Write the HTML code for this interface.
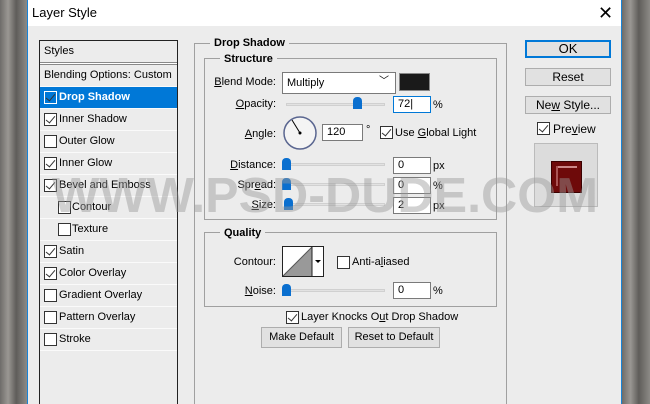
<!DOCTYPE html>
<html><head><style>
*{margin:0;padding:0;box-sizing:border-box}
html,body{width:650px;height:404px;overflow:hidden}
body{position:relative;background:#7a7875;font-family:"Liberation Sans",sans-serif;font-size:11px;color:#000}
.a{position:absolute}
.bg{background:linear-gradient(90deg,#6e6c69,#9a9793 30%,#5f5d5a 60%,#8c8a86)}
.cb{position:absolute;width:13px;height:13px;border:1px solid #333;background:#fff}
.cb.on::after{content:"";position:absolute;left:3px;top:0px;width:4px;height:8px;border:solid #333;border-width:0 1.5px 1.5px 0;transform:rotate(40deg)}
.row{position:absolute;left:40px;width:137px;height:22px;border-bottom:1px solid #fafafa;line-height:21px}
.inp{position:absolute;width:38px;height:17px;border:1px solid #7a7a7a;background:#fff;padding-left:4px;line-height:15px}
.u{position:absolute;line-height:17px}
.lbl{position:absolute;text-align:right;width:80px;line-height:14px}
.trk{position:absolute;height:3px;background:#e2e2e2;border:1px solid #d0d0d0}
.th{position:absolute;width:9px;height:12px;background:#0a6fcf;border-radius:4px 4px 0 0}
.btn{position:absolute;background:#e1e1e1;border:1px solid #adadad;text-align:center}
.fs{position:absolute;border:1px solid #a0a0a0}
.lg{position:absolute;background:#ececec;font-weight:bold;padding:0 4px;line-height:12px}
u{text-decoration:underline}
</style></head><body>
<div class="a bg" style="left:0;top:0;width:27px;height:404px"></div>
<div class="a bg" style="left:622px;top:0;width:28px;height:404px"></div>
<div class="a" style="left:27px;top:0;width:595px;height:404px;background:#ececec;border-left:1px solid #1883d7;border-right:1px solid #1883d7"></div>
<div class="a" style="left:28px;top:0;width:593px;height:26px;background:#fff;font-size:13px;line-height:26px;padding-left:4px">Layer Style</div>
<div class="a" style="left:598px;top:4px;font-size:18px;line-height:18px">✕</div>

<div class="a" style="left:39px;top:40px;width:139px;height:364px;border:1px solid #222;border-bottom:none;background:#ececec"></div>
<div class="a" style="left:44px;top:44px;line-height:14px">Styles</div>
<div class="a" style="left:40px;top:62px;width:137px;height:3px;border-top:1px solid #888;border-bottom:1px solid #888;background:#fff"></div>
<div class="row" style="top:65px;padding-left:4px">Blending Options: Custom</div>
<div class="row" style="top:87px;background:#0078d7;color:#fff;font-weight:bold;padding-left:19px">Drop Shadow</div>
<div class="cb on" style="left:44px;top:91px;border-color:#fff;background:#0078d7"></div>
<div class="row" style="top:109px;padding-left:19px">Inner Shadow</div><div class="cb on" style="left:44px;top:113px"></div>
<div class="row" style="top:131px;padding-left:19px">Outer Glow</div><div class="cb" style="left:44px;top:135px"></div>
<div class="row" style="top:153px;padding-left:19px">Inner Glow</div><div class="cb on" style="left:44px;top:157px"></div>
<div class="row" style="top:175px;padding-left:19px">Bevel and Emboss</div><div class="cb on" style="left:44px;top:179px"></div>
<div class="row" style="top:197px;padding-left:32px">Contour</div><div class="cb" style="left:58px;top:201px"></div>
<div class="row" style="top:219px;padding-left:32px">Texture</div><div class="cb" style="left:58px;top:223px"></div>
<div class="row" style="top:241px;padding-left:19px">Satin</div><div class="cb on" style="left:44px;top:245px"></div>
<div class="row" style="top:263px;padding-left:19px">Color Overlay</div><div class="cb on" style="left:44px;top:267px"></div>
<div class="row" style="top:285px;padding-left:19px">Gradient Overlay</div><div class="cb" style="left:44px;top:289px"></div>
<div class="row" style="top:307px;padding-left:19px">Pattern Overlay</div><div class="cb" style="left:44px;top:311px"></div>
<div class="row" style="top:329px;padding-left:19px">Stroke</div><div class="cb" style="left:44px;top:333px"></div>

<div class="fs" style="left:194px;top:43px;width:313px;height:361px;border-bottom:none"></div>
<div class="lg" style="left:210px;top:37px">Drop Shadow</div>
<div class="fs" style="left:204px;top:58px;width:293px;height:162px"></div>
<div class="lg" style="left:220px;top:53px">Structure</div>
<div class="lbl" style="left:196px;top:75px"><u>B</u>lend Mode:</div>
<div class="a" style="left:282px;top:72px;width:114px;height:22px;border:1px solid #7a7a7a;background:#fff;padding-left:4px;line-height:20px">Multiply<span style="position:absolute;right:6px;top:-1px;font-size:10px">﹀</span></div>
<div class="a" style="left:399px;top:73px;width:31px;height:18px;background:#1a1a1a;border:1px solid #888"></div>
<div class="lbl" style="left:196px;top:97px"><u>O</u>pacity:</div>
<div class="trk" style="left:286px;top:103px;width:99px"></div><div class="th" style="left:353px;top:97px"></div>
<div class="inp" style="left:393px;top:96px;border-color:#0078d7">72|</div><div class="u" style="left:433px;top:97px">%</div>
<div class="lbl" style="left:196px;top:127px"><u>A</u>ngle:</div>
<svg class="a" style="left:282px;top:115px" width="36" height="36"><circle cx="18" cy="18" r="16" fill="#f4f4f4" stroke="#5a6690" stroke-width="1.5"/><line x1="18" y1="18" x2="10" y2="5" stroke="#000"/><circle cx="18" cy="18" r="1.5"/></svg>
<div class="inp" style="left:322px;top:124px;width:41px">120</div><div class="u" style="left:366px;top:122px">°</div>
<div class="cb on" style="left:380px;top:126px"></div><div class="a" style="left:395px;top:127px">Use <u>G</u>lobal Light</div>
<div class="lbl" style="left:196px;top:158px"><u>D</u>istance:</div>
<div class="trk" style="left:286px;top:163px;width:99px"></div><div class="th" style="left:282px;top:158px"></div>
<div class="inp" style="left:393px;top:157px">0</div><div class="u" style="left:433px;top:158px">px</div>
<div class="lbl" style="left:196px;top:178px">Spr<u>e</u>ad:</div>
<div class="trk" style="left:286px;top:183px;width:99px"></div><div class="th" style="left:282px;top:178px"></div>
<div class="inp" style="left:393px;top:177px">0</div><div class="u" style="left:433px;top:178px">%</div>
<div class="lbl" style="left:196px;top:198px"><u>S</u>ize:</div>
<div class="trk" style="left:286px;top:203px;width:99px"></div><div class="th" style="left:284px;top:198px"></div>
<div class="inp" style="left:393px;top:197px">2</div><div class="u" style="left:433px;top:198px">px</div>

<div class="fs" style="left:204px;top:232px;width:293px;height:75px"></div>
<div class="lg" style="left:220px;top:227px">Quality</div>
<div class="lbl" style="left:196px;top:255px">Contour:</div>
<div class="a" style="left:282px;top:246px;width:42px;height:31px;border:1px solid #222;background:#fff"></div>
<svg class="a" style="left:283px;top:247px" width="40" height="29"><polygon points="0,29 29,0 29,29" fill="#999"/><line x1="0" y1="29" x2="29" y2="0" stroke="#555"/><line x1="29" y1="0" x2="29" y2="29" stroke="#222"/><polygon points="32,13 38,13 35,16" fill="#000"/></svg>
<div class="cb" style="left:337px;top:256px"></div><div class="a" style="left:352px;top:256px">Anti-a<u>l</u>iased</div>
<div class="lbl" style="left:196px;top:284px"><u>N</u>oise:</div>
<div class="trk" style="left:286px;top:289px;width:99px"></div><div class="th" style="left:282px;top:284px"></div>
<div class="inp" style="left:393px;top:282px">0</div><div class="u" style="left:433px;top:283px">%</div>

<div class="cb on" style="left:286px;top:311px"></div><div class="a" style="left:301px;top:311px">Layer Knocks O<u>u</u>t Drop Shadow</div>
<div class="btn" style="left:261px;top:327px;width:81px;height:21px;line-height:19px">Make Default</div>
<div class="btn" style="left:348px;top:327px;width:92px;height:21px;line-height:19px">Reset to Default</div>

<div class="btn" style="left:525px;top:40px;width:86px;height:18px;border:2px solid #0078d7;font-size:13px;line-height:14px">OK</div>
<div class="btn" style="left:525px;top:68px;width:86px;height:18px;font-size:12px;line-height:16px">Reset</div>
<div class="btn" style="left:525px;top:96px;width:86px;height:18px;font-size:12px;line-height:16px">Ne<u>w</u> Style...</div>
<div class="cb on" style="left:537px;top:122px"></div><div class="a" style="left:553px;top:122px;font-size:12px">Pre<u>v</u>iew</div>
<div class="a" style="left:534px;top:143px;width:64px;height:64px;background:#dcdcdc;border:1px solid #bbb"></div>
<div class="a" style="left:551px;top:161px;width:31px;height:32px;background:#6e0a0a;border:1px solid #3a0000"><div style="position:absolute;left:4px;top:4px;width:21px;height:2px;background:#c88"></div><div style="position:absolute;left:4px;top:4px;width:2px;height:20px;background:#a55"></div></div>

<svg class="a" style="left:0;top:0" width="650" height="404"><text x="52" y="212" font-family="Liberation Sans" font-weight="bold" font-size="49" fill="#999" fill-opacity="0.45" textLength="546" lengthAdjust="spacingAndGlyphs">WWW.PSD-DUDE.COM</text></svg>
</body></html>
